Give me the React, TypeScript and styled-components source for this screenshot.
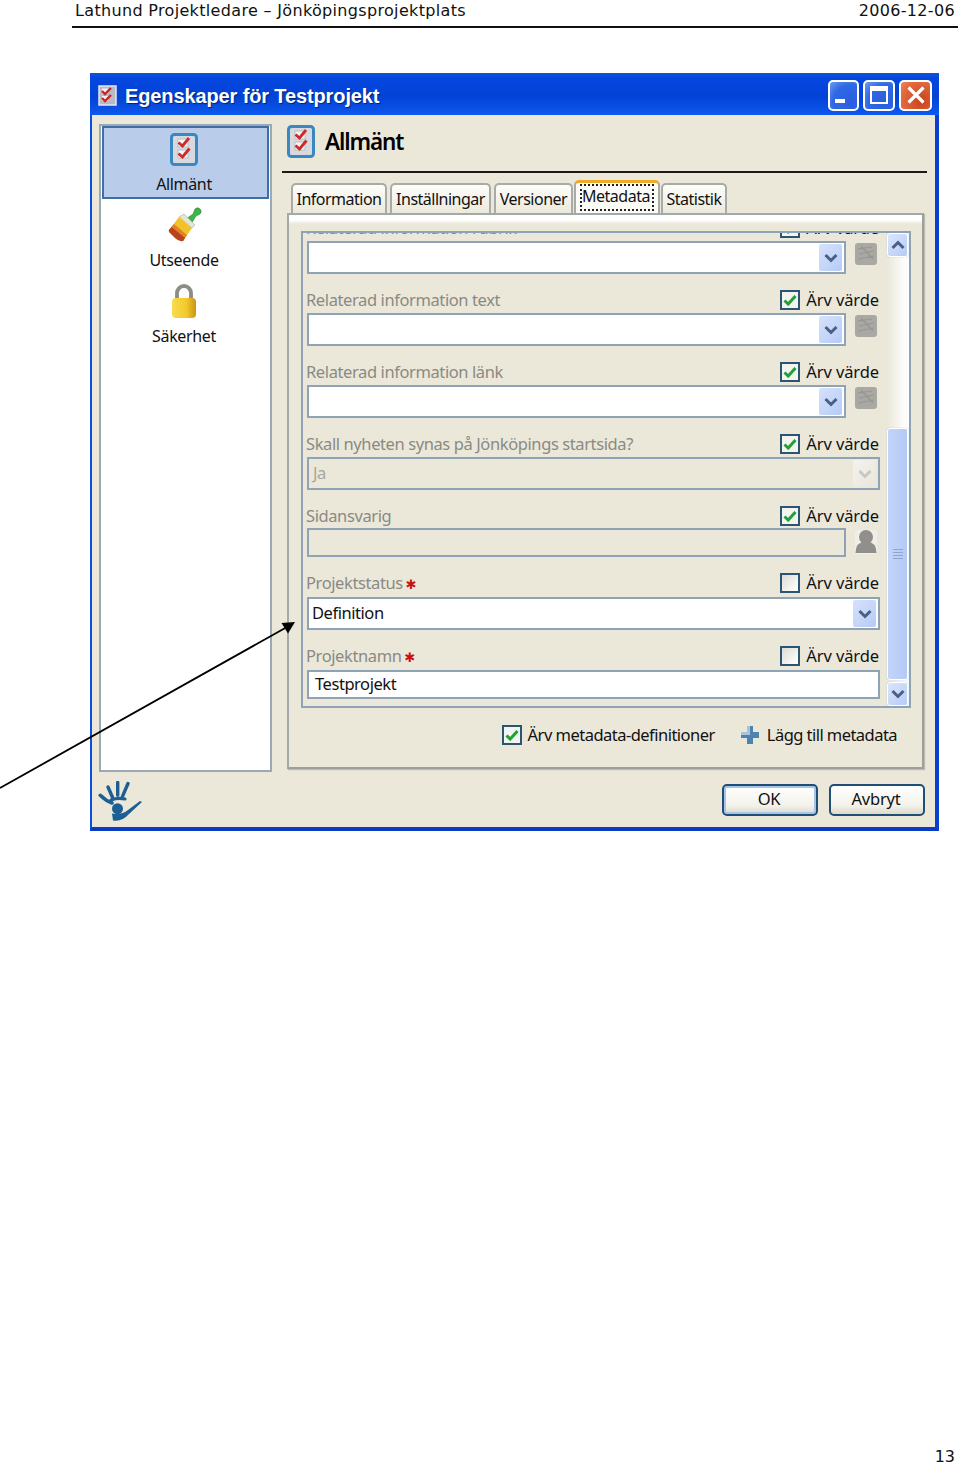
import React from "react";
import styled, { createGlobalStyle } from "styled-components";

const GlobalStyle = createGlobalStyle`
  html, body {
    margin: 0;
    padding: 0;
    background: #fff;
  }
  * {
    box-sizing: border-box;
  }
`;

const Page = styled.div`
  position: relative;
  width: 960px;
  height: 1466px;
  display: flex;
  flex-direction: column;
  font-family: "DejaVu Sans", sans-serif;
  overflow: hidden;
`;

const DocHeader = styled.header`
  margin-left: 72px;
  width: 886px;
  height: 28px;
  padding: 0 3px 5px;
  display: flex;
  justify-content: space-between;
  align-items: center;
  border-bottom: 2px solid #111;
  font-size: 16px;
  letter-spacing: 0.33px;
  color: #111;
`;

const PageNumber = styled.div`
  margin-top: auto;
  padding-right: 5px;
  text-align: right;
  font-size: 16px;
  line-height: 18px;
  color: #111;
`;

const ArrowLayer = styled.svg`
  position: absolute;
  left: 0;
  top: 615px;
  pointer-events: none;
`;

const Window = styled.div`
  margin: 45px 0 0 90px;
  width: 849px;
  height: 758px;
  display: flex;
  flex-direction: column;
  background: #0831d9;
  border-left: 2px solid #0a50e0;
  border-right: 4px solid #0a3fd0;
  border-bottom: 4px solid #0a3bc4;
  font-family: "Noto Sans", sans-serif;
  font-size: 16px;
  color: #111;
`;

const TitleBar = styled.div`
  height: 42px;
  flex: none;
  margin-left: -2px;
  margin-right: -4px;
  padding: 2px 7px 0 8px;
  display: flex;
  align-items: center;
  background: linear-gradient(#0a58d8 0%, #0647e0 12%, #0242d6 55%, #0a52e6 88%, #0c5af0 100%);
`;

const TitleText = styled.div`
  margin: 2px 0 0 8px;
  flex: 1;
  font-family: "Liberation Sans", sans-serif;
  font-weight: 700;
  font-size: 20px;
  letter-spacing: -0.12px;
  color: #fff;
  text-shadow: 1px 1px 1px #02227c;
`;

const WinButton = styled.div<{ $close?: boolean; $width: number }>`
  width: ${(p) => p.$width}px;
  height: 31px;
  margin-left: 4px;
  display: flex;
  align-items: center;
  justify-content: center;
  border: 2px solid #fff;
  border-radius: 5px;
  background: ${(p) =>
    p.$close
      ? "radial-gradient(circle at 70% 70%, #c9421c, #e2693f 70%, #e88a66)"
      : "radial-gradient(circle at 75% 75%, #2a5ee0, #2f68e4 60%, #6f9cf0)"};
`;

const Client = styled.div`
  flex: 1;
  display: flex;
  flex-direction: column;
  padding: 9px 8px 0 7px;
  background: #ebe8da;
`;

const ClientBody = styled.div`
  height: 648px;
  flex: none;
  display: flex;
  gap: 10px;
`;

const Sidebar = styled.nav`
  width: 173px;
  padding: 0 1px;
  background: #fff;
  border: 2px solid #9aa9b5;
`;

const NavItem = styled.div<{ $active?: boolean }>`
  height: ${(p) => (p.$active ? "73px" : "76px")};
  padding: ${(p) => (p.$active ? "3px" : "8px")} 3px 0 0;
  display: flex;
  flex-direction: column;
  align-items: center;
  background: ${(p) => (p.$active ? "#b9cdea" : "transparent")};
  border: ${(p) => (p.$active ? "2px solid #3d6ea6" : "none")};
`;

const NavIconSlot = styled.div`
  height: 36px;
  display: flex;
  align-items: center;
  justify-content: center;
`;

const NavLabel = styled.div`
  margin-top: 7px;
  line-height: 20px;
  font-size: 16px;
  letter-spacing: -0.35px;
`;

const Main = styled.main`
  width: 645px;
  display: flex;
  flex-direction: column;
`;

const MainHead = styled.div`
  height: 49px;
  flex: none;
  padding: 0 0 13px 5px;
  display: flex;
  align-items: center;
  gap: 10px;
  border-bottom: 2px solid #1a1a1a;
`;

const MainTitle = styled.h1`
  margin: 0;
  font-family: "Noto Sans", sans-serif;
  font-size: 22.5px;
  font-weight: 600;
  letter-spacing: -1.1px;
  color: #000;
`;

const TabStrip = styled.div`
  margin-top: 7px;
  height: 33px;
  flex: none;
  padding-left: 9px;
  display: flex;
  align-items: flex-end;
`;

const Tab = styled.div<{ $width: number; $gap: number; $active?: boolean }>`
  position: relative;
  width: ${(p) => p.$width}px;
  margin-right: ${(p) => p.$gap}px;
  height: ${(p) => (p.$active ? "33px" : "30px")};
  padding: ${(p) => (p.$active ? "0 4px" : "0 0 1px")};
  display: flex;
  align-items: ${(p) => (p.$active ? "flex-start" : "center")};
  justify-content: center;
  font-size: 16px;
  letter-spacing: -0.5px;
  white-space: nowrap;
  border: 2px solid #a9aca6;
  border-top: ${(p) => (p.$active ? "3px solid #f0aa26" : "2px solid #a9aca6")};
  border-bottom: none;
  border-radius: 5px 5px 0 0;
  background: ${(p) => (p.$active ? "#fbfbf8" : "linear-gradient(#fdfdfb, #ece9dc)")};
`;

const TabFocus = styled.span`
  margin-top: 1px;
  width: 100%;
  height: 27px;
  padding-right: 2px;
  line-height: 20px;
  text-align: center;
  border: 2px dotted #222;
`;

const TabPanel = styled.section`
  margin-left: 5px;
  width: 637px;
  height: 556px;
  flex: none;
  display: flex;
  flex-direction: column;
  padding: 16px 11px 0 12px;
  border: 2px solid #a3a8a8;
  border-right-color: #9c9f9c;
  border-bottom-color: #9c9f9c;
  box-shadow: 1px 1px 1px #bdbab0;
  background: linear-gradient(#fff 0, #fff 5px, #ebe8da 9px);
`;

const MetaBox = styled.div`
  width: 610px;
  height: 477px;
  flex: none;
  display: flex;
  border: 2px solid #8ea3b6;
`;

const ScrollArea = styled.div`
  width: 584px;
  height: 100%;
  overflow: hidden;
  padding: 0 7px 0 4px;
`;

const ScrollOffset = styled.div`
  margin-top: -15px;
  display: flex;
  flex-direction: column;
  gap: 16px;
`;

const Row = styled.div`
  display: flex;
  flex-direction: column;
`;

const LabelRow = styled.div<{ $gap: number }>`
  height: 20px;
  margin-bottom: ${(p) => p.$gap}px;
  padding-right: 1px;
  display: flex;
  align-items: center;
  justify-content: space-between;
`;

const FieldLabel = styled.span`
  margin: -2px 0 0 -1px;
  display: flex;
  align-items: center;
  gap: 3px;
  color: #8a8a84;
  font-size: 16.5px;
  letter-spacing: -0.4px;
`;

const Required = styled.span`
  margin-top: 5px;
  color: #c4141a;
  font-family: "DejaVu Sans", sans-serif;
  font-size: 13px;
`;

const Inherit = styled.label`
  display: flex;
  align-items: center;
  gap: 6px;
  font-size: 16.5px;
  line-height: 18px;
  letter-spacing: -0.1px;
  white-space: nowrap;
`;

const FooterCheck = styled(Inherit)`
  letter-spacing: -0.52px;
`;

const CheckBoxBox = styled.span<{ $checked?: boolean }>`
  width: 20px;
  height: 20px;
  flex: none;
  display: flex;
  align-items: center;
  justify-content: center;
  border: 2px solid #2a5574;
  background: ${(p) =>
    p.$checked ? "#f4f4ee" : "linear-gradient(135deg, #dcdcd4, #f6f6f2 70%, #fff)"};
`;

const FieldLine = styled.div`
  display: flex;
  align-items: flex-start;
  gap: 9px;
`;

const Field = styled.div<{ $height: number; $width?: number; $disabled?: boolean; $indent?: number }>`
  width: ${(p) => p.$width ?? 573}px;
  height: ${(p) => p.$height}px;
  flex: none;
  padding: 0 2px 0 ${(p) => p.$indent ?? 3}px;
  display: flex;
  align-items: center;
  justify-content: space-between;
  border: 2px solid #8ea3b6;
  background: ${(p) => (p.$disabled ? "#ebe8da" : "#fff")};
  color: ${(p) => (p.$disabled ? "#a6a6a0" : "#111")};
  font-size: 16.5px;
  letter-spacing: -0.45px;
`;

const FieldValue = styled.span`
  margin-top: -3px;
`;

const DropButton = styled.span<{ $disabled?: boolean }>`
  width: 23px;
  height: 27px;
  flex: none;
  display: flex;
  align-items: center;
  justify-content: center;
  border-radius: 2px;
  background: ${(p) =>
    p.$disabled ? "linear-gradient(135deg, #f4f3ec, #e8e6dc)" : "linear-gradient(135deg, #d6e2fb, #b6cbf5)"};
`;

const SideIconSlot = styled.span<{ $offset: number }>`
  width: 24px;
  margin: ${(p) => p.$offset}px 0 0 -1px;
  flex: none;
  display: flex;
`;

const ScrollBar = styled.div`
  width: 22px;
  height: 100%;
  display: flex;
  flex-direction: column;
  background: linear-gradient(90deg, #ebe8da, #fdfdfb 80%);
`;

const ScrollButton = styled.div`
  width: 21px;
  height: 24px;
  flex: none;
  display: flex;
  align-items: center;
  justify-content: center;
  border: 1px solid #fff;
  border-radius: 3px;
  box-shadow: 0 0 1px #7f9db9;
  background: linear-gradient(135deg, #dbe6fd, #b6cbf5);
`;

const ScrollSpace = styled.div`
  height: 171px;
  flex: none;
`;

const ScrollThumb = styled.div`
  width: 21px;
  height: 252px;
  flex: none;
  margin-bottom: 2px;
  display: flex;
  flex-direction: column;
  align-items: center;
  justify-content: center;
  gap: 2px;
  border: 1px solid #fff;
  border-radius: 3px;
  box-shadow: 0 0 1px #7f9db9;
  background: linear-gradient(90deg, #c4d5fa, #b4c9f6);
`;

const Grip = styled.i`
  width: 10px;
  height: 1px;
  display: block;
  background: #8fa6cf;
`;

const PanelFooter = styled.div`
  margin-top: 15px;
  padding-right: 14px;
  display: flex;
  justify-content: flex-end;
  align-items: center;
  gap: 25px;
  font-size: 16.5px;
  letter-spacing: -0.55px;
`;

const AddLink = styled.span`
  display: flex;
  align-items: center;
  gap: 7px;
`;

const WindowFooter = styled.footer`
  flex: 1;
  padding: 7px 2px 0 0;
  display: flex;
  align-items: flex-start;
  justify-content: space-between;
`;

const LogoSlot = styled.span`
  margin: 2px 0 0 -1px;
  display: flex;
`;

const FooterButtons = styled.div`
  margin-top: 5px;
  display: flex;
  gap: 11px;
`;

const DialogButton = styled.button<{ $primary?: boolean }>`
  width: 96px;
  height: 32px;
  padding: 0 2px 3px 0;
  font-family: "Noto Sans", sans-serif;
  font-size: 16.5px;
  letter-spacing: -0.2px;
  color: #111;
  border: 2px solid #1f4f74;
  border-radius: 5px;
  background: linear-gradient(#fff, #f3f2ea 70%, #dcd9cc);
  box-shadow: ${(p) => (p.$primary ? "inset 0 0 0 2px #a9c4ea" : "none")};
`;

const Check = () => (
  <svg width="14" height="12" viewBox="0 0 14 12">
    <path d="M1.5 6.5 L5.2 10 L12.5 2" fill="none" stroke="#21a038" strokeWidth="3" />
  </svg>
);

const Chevron = ({ color = "#4a5f85", up = false }: { color?: string; up?: boolean }) => (
  <svg width="14" height="10" viewBox="0 0 14 10">
    <path
      d={up ? "M1.5 8 L7 2.5 L12.5 8" : "M1.5 2 L7 7.5 L12.5 2"}
      fill="none"
      stroke={color}
      strokeWidth="3"
    />
  </svg>
);

const ChecklistIcon = ({ small = false }: { small?: boolean }) =>
  small ? (
    <svg width="19" height="21" viewBox="0 0 19 21">
      <rect x="1" y="1" width="17" height="19" fill="#b9bac4" stroke="#e6e6f0" strokeWidth="1.5" />
      <rect x="4" y="3.5" width="6" height="5" fill="#f2f2f2" />
      <rect x="4" y="11" width="6" height="5" fill="#f2f2f2" />
      <path d="M4 6 L7 9 L13 3 M4 13 L7 16 L13 10" fill="none" stroke="#c8262a" strokeWidth="2.4" />
    </svg>
  ) : (
    <svg width="28" height="33" viewBox="0 0 28 33">
      <rect x="1.5" y="1.5" width="25" height="30" rx="3" fill="#d8d9de" stroke="#3a88c2" strokeWidth="3" />
      <rect x="8" y="6" width="10" height="8" fill="#f6f6f6" stroke="#b5b5b5" strokeWidth="0.8" />
      <rect x="8" y="17" width="10" height="8" fill="#f6f6f6" stroke="#b5b5b5" strokeWidth="0.8" />
      <path d="M8.5 9.5 L12.5 13 L19 5 M8.5 20.5 L12.5 24 L19.5 15.5" fill="none" stroke="#cc2a2c" strokeWidth="2.8" />
    </svg>
  );

const BrushIcon = () => (
  <svg width="36" height="36" viewBox="0 0 36 36">
    <path d="M20 12 L27 7 L29 2 A3.4 3.4 0 1 1 34 7 L30 9 L25 17 Z" fill="#3cb54a" stroke="#2a8a2e" strokeWidth="0.6" />
    <path d="M13 10 L18 7 L29 18 L26 21 Z" fill="#e4e6d4" stroke="#a6ae98" strokeWidth="0.6" />
    <path d="M13 10 L26 21 L17 34 L3 23 Z" fill="#f2c22c" />
    <path d="M8 17 L21 28 L17 34 L3 23 Z" fill="#e28224" />
    <path d="M5.5 20 L19 31 L17 34 Q13 35 9 31 L3 25 Q2.5 23 3 23 Z" fill="#b8431c" />
  </svg>
);

const LockIcon = () => (
  <svg width="26" height="35" viewBox="0 0 26 35">
    <defs>
      <linearGradient id="lockBody" x1="0" x2="1">
        <stop offset="0" stopColor="#f9dc4c" />
        <stop offset="0.6" stopColor="#f2c92a" />
        <stop offset="1" stopColor="#c99416" />
      </linearGradient>
    </defs>
    <path d="M6 15 V9 A7 7 0 0 1 20 9 V15" fill="none" stroke="#8d8d86" strokeWidth="3.8" />
    <rect x="1" y="14" width="24" height="20" rx="4" fill="url(#lockBody)" />
  </svg>
);

const GreyIcon = () => (
  <svg width="24" height="24" viewBox="0 0 24 24">
    <rect x="1" y="1" width="22" height="22" rx="3" fill="#a9a8a3" />
    <path d="M4 7 L18 5 M5 12 L20 9 M4 17 L20 14 M7 4 L19 17" stroke="#979692" strokeWidth="1.2" />
  </svg>
);

const PersonIcon = () => (
  <svg width="24" height="26" viewBox="0 0 24 26">
    <rect x="1" y="1" width="22" height="24" rx="3" fill="#f0eee6" />
    <circle cx="12" cy="8" r="7" fill="#908f8c" />
    <path d="M1.5 24 Q1.5 13 12 12 Q22.5 13 22.5 24 Z" fill="#908f8c" />
  </svg>
);

const PlusIcon = () => (
  <svg width="20" height="20" viewBox="0 0 20 20">
    <path d="M7 1 H13 V7 H19 V13 H13 V19 H7 V13 H1 V7 H7 Z" fill="#4d83b3" />
    <path d="M7 1 H10 V10 H1 V7 H7 Z" fill="#a8c4dc" />
  </svg>
);

const HandLogo = () => (
  <svg width="46" height="42" viewBox="0 0 46 42">
    <g fill="none" stroke="#1d5f92" strokeLinecap="round">
      <path d="M10 6 L14.7 16.7 M19.7 1.5 L19.7 14.3 M30 2.5 L24.5 15.3" strokeWidth="3.4" />
      <path d="M2.3 14.3 Q8 20 14 22" strokeWidth="3.6" />
      <path d="M13 19 Q20 16.5 27 18" strokeWidth="3.2" />
    </g>
    <circle cx="19.5" cy="27.7" r="5.5" fill="#1d5f92" />
    <path d="M44 21 L31 33 Q24 41 15 39.5 L14 32.5 Q24 34 30 29 L42 20 Z" fill="#1d5f92" />
  </svg>
);

type RowData = {
  label: string;
  required?: boolean;
  inherit: boolean;
  gap: number;
  kind: "combo" | "disabledSelect" | "person" | "select" | "text";
  value?: string;
};

const rows: RowData[] = [
  { label: "Relaterad information rubrik", inherit: true, gap: 3, kind: "combo" },
  { label: "Relaterad information text", inherit: true, gap: 3, kind: "combo" },
  { label: "Relaterad information länk", inherit: true, gap: 3, kind: "combo" },
  { label: "Skall nyheten synas på Jönköpings startsida?", inherit: true, gap: 3, kind: "disabledSelect", value: "Ja" },
  { label: "Sidansvarig", inherit: true, gap: 2, kind: "person" },
  { label: "Projektstatus", required: true, inherit: false, gap: 4, kind: "select", value: "Definition" },
  { label: "Projektnamn", required: true, inherit: false, gap: 4, kind: "text", value: "Testprojekt" },
];

const tabs = [
  { name: "Information", width: 96, gap: 3 },
  { name: "Inställningar", width: 101, gap: 3 },
  { name: "Versioner", width: 79, gap: 1 },
  { name: "Metadata", width: 86, gap: 1, active: true },
  { name: "Statistik", width: 66, gap: 0 },
];

const renderField = (row: RowData) => {
  switch (row.kind) {
    case "combo":
      return (
        <FieldLine>
          <Field $height={33} $width={539}>
            <span />
            <DropButton>
              <Chevron />
            </DropButton>
          </Field>
          <SideIconSlot $offset={1}>
            <GreyIcon />
          </SideIconSlot>
        </FieldLine>
      );
    case "disabledSelect":
      return (
        <Field $height={33} $disabled $indent={4}>
          <FieldValue>{row.value}</FieldValue>
          <DropButton $disabled>
            <Chevron color="#c8c8c2" />
          </DropButton>
        </Field>
      );
    case "person":
      return (
        <FieldLine>
          <Field $height={29} $width={539} $disabled />
          <SideIconSlot $offset={1}>
            <PersonIcon />
          </SideIconSlot>
        </FieldLine>
      );
    case "select":
      return (
        <Field $height={33}>
          <FieldValue>{row.value}</FieldValue>
          <DropButton>
            <Chevron />
          </DropButton>
        </Field>
      );
    default:
      return (
        <Field $height={29} $indent={6}>
          <FieldValue>{row.value}</FieldValue>
        </Field>
      );
  }
};

const App: React.FC = () => {
  return (
    <Page>
      <GlobalStyle />
      <DocHeader>
        <span>Lathund Projektledare – Jönköpingsprojektplats</span>
        <span>2006-12-06</span>
      </DocHeader>

      <Window>
        <TitleBar>
          <ChecklistIcon small />
          <TitleText>Egenskaper för Testprojekt</TitleText>
          <WinButton $width={31}>
            <svg width="25" height="25" viewBox="0 0 25 25">
              <rect x="4" y="16" width="10" height="4" fill="#fff" />
            </svg>
          </WinButton>
          <WinButton $width={32}>
            <svg width="24" height="22" viewBox="0 0 24 22">
              <rect x="4" y="3" width="16" height="16" fill="none" stroke="#fff" strokeWidth="2" />
              <rect x="4" y="3" width="16" height="4" fill="#fff" />
            </svg>
          </WinButton>
          <WinButton $width={33} $close>
            <svg width="22" height="22" viewBox="0 0 22 22">
              <path d="M3.5 3.5 L18.5 18.5 M18.5 3.5 L3.5 18.5" stroke="#fff" strokeWidth="3.2" />
            </svg>
          </WinButton>
        </TitleBar>

        <Client>
          <ClientBody>
            <Sidebar>
              <NavItem $active>
                <NavIconSlot>
                  <ChecklistIcon />
                </NavIconSlot>
                <NavLabel>Allmänt</NavLabel>
              </NavItem>
              <NavItem>
                <NavIconSlot>
                  <BrushIcon />
                </NavIconSlot>
                <NavLabel>Utseende</NavLabel>
              </NavItem>
              <NavItem>
                <NavIconSlot>
                  <LockIcon />
                </NavIconSlot>
                <NavLabel>Säkerhet</NavLabel>
              </NavItem>
            </Sidebar>

            <Main>
              <MainHead>
                <ChecklistIcon />
                <MainTitle>Allmänt</MainTitle>
              </MainHead>

              <TabStrip>
                {tabs.map((t) => (
                  <Tab key={t.name} $width={t.width} $gap={t.gap} $active={t.active}>
                    {t.active ? <TabFocus>{t.name}</TabFocus> : t.name}
                  </Tab>
                ))}
              </TabStrip>

              <TabPanel>
                <MetaBox>
                  <ScrollArea>
                    <ScrollOffset>
                      {rows.map((row) => (
                        <Row key={row.label}>
                          <LabelRow $gap={row.gap}>
                            <FieldLabel>
                              {row.label}
                              {row.required && <Required>✱</Required>}
                            </FieldLabel>
                            <Inherit>
                              <CheckBoxBox $checked={row.inherit}>{row.inherit && <Check />}</CheckBoxBox>
                              Ärv värde
                            </Inherit>
                          </LabelRow>
                          {renderField(row)}
                        </Row>
                      ))}
                    </ScrollOffset>
                  </ScrollArea>
                  <ScrollBar>
                    <ScrollButton>
                      <Chevron up />
                    </ScrollButton>
                    <ScrollSpace />
                    <ScrollThumb>
                      <Grip />
                      <Grip />
                      <Grip />
                      <Grip />
                    </ScrollThumb>
                    <ScrollButton>
                      <Chevron />
                    </ScrollButton>
                  </ScrollBar>
                </MetaBox>

                <PanelFooter>
                  <FooterCheck>
                    <CheckBoxBox $checked>
                      <Check />
                    </CheckBoxBox>
                    Ärv metadata-definitioner
                  </FooterCheck>
                  <AddLink>
                    <PlusIcon />
                    Lägg till metadata
                  </AddLink>
                </PanelFooter>
              </TabPanel>
            </Main>
          </ClientBody>

          <WindowFooter>
            <LogoSlot>
              <HandLogo />
            </LogoSlot>
            <FooterButtons>
              <DialogButton $primary>OK</DialogButton>
              <DialogButton>Avbryt</DialogButton>
            </FooterButtons>
          </WindowFooter>
        </Client>
      </Window>

      <PageNumber>13</PageNumber>

      <ArrowLayer width="300" height="175" viewBox="0 0 300 175">
        <line x1="0" y1="173" x2="287" y2="12" stroke="#000" strokeWidth="1.8" />
        <path d="M295 7 L281.5 8 L288 18.5 Z" fill="#000" />
      </ArrowLayer>
    </Page>
  );
};

export default App;
